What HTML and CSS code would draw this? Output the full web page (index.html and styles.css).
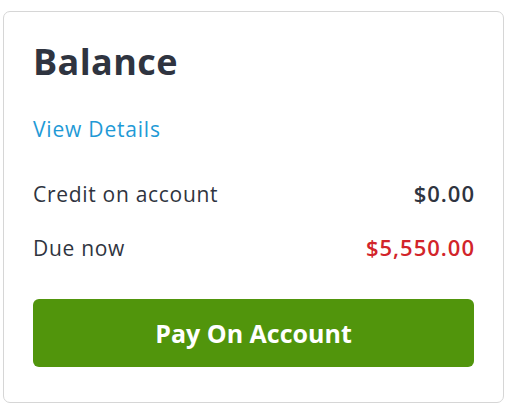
FILE: index.html
```html
<!DOCTYPE html>
<html>
<head>
<meta charset="utf-8">
<link rel="stylesheet" href="styles.css">
</head>
<body>
<div class="card">
  <h1 class="title">Balance</h1>
  <a class="details" href="#">View Details</a>
  <div class="row first">
    <span class="label">Credit on account</span>
    <span class="value">$0.00</span>
  </div>
  <div class="row">
    <span class="label">Due now</span>
    <span class="value due">$5,550.00</span>
  </div>
  <button class="pay">Pay On Account</button>
</div>
</body>
</html>
```
FILE: styles.css
```css
html, body {
  margin: 0;
  padding: 0;
  background: #fff;
}
body {
  padding: 11px 5px 4px 3px;
  font-family: "Open Sans", "Liberation Sans", sans-serif;
  color: #2f3440;
}
.card {
  box-sizing: border-box;
  width: 501px;
  height: 392px;
  border: 1px solid #d6d6d6;
  border-radius: 7px;
  padding: 28px 29px 0 29px;
  display: flex;
  flex-direction: column;
}
.title {
  margin: 0;
  font-size: 36px;
  font-weight: 700;
  line-height: 44px;
  letter-spacing: 0.4px;
  color: #2f3440;
}
.details {
  margin-top: 31px;
  font-size: 21px;
  line-height: 28px;
  letter-spacing: 0.8px;
  color: #1f9ad6;
  text-decoration: none;
  align-self: flex-start;
}
.row {
  display: flex;
  justify-content: space-between;
  align-items: baseline;
  font-size: 21px;
  line-height: 28px;
  letter-spacing: 0.7px;
  margin-top: 26px;
}
.row.first {
  margin-top: 37px;
}
.value {
  font-size: 22px;
  font-weight: 600;
  line-height: 26px;
  letter-spacing: 1px;
  margin-right: -1px;
}
.due {
  color: #d2242a;
}
.pay {
  margin-top: 37px;
  height: 68px;
  border: none;
  border-radius: 6px;
  background: #51950c;
  color: #fff;
  font-family: inherit;
  font-size: 25px;
  font-weight: 700;
}
```
